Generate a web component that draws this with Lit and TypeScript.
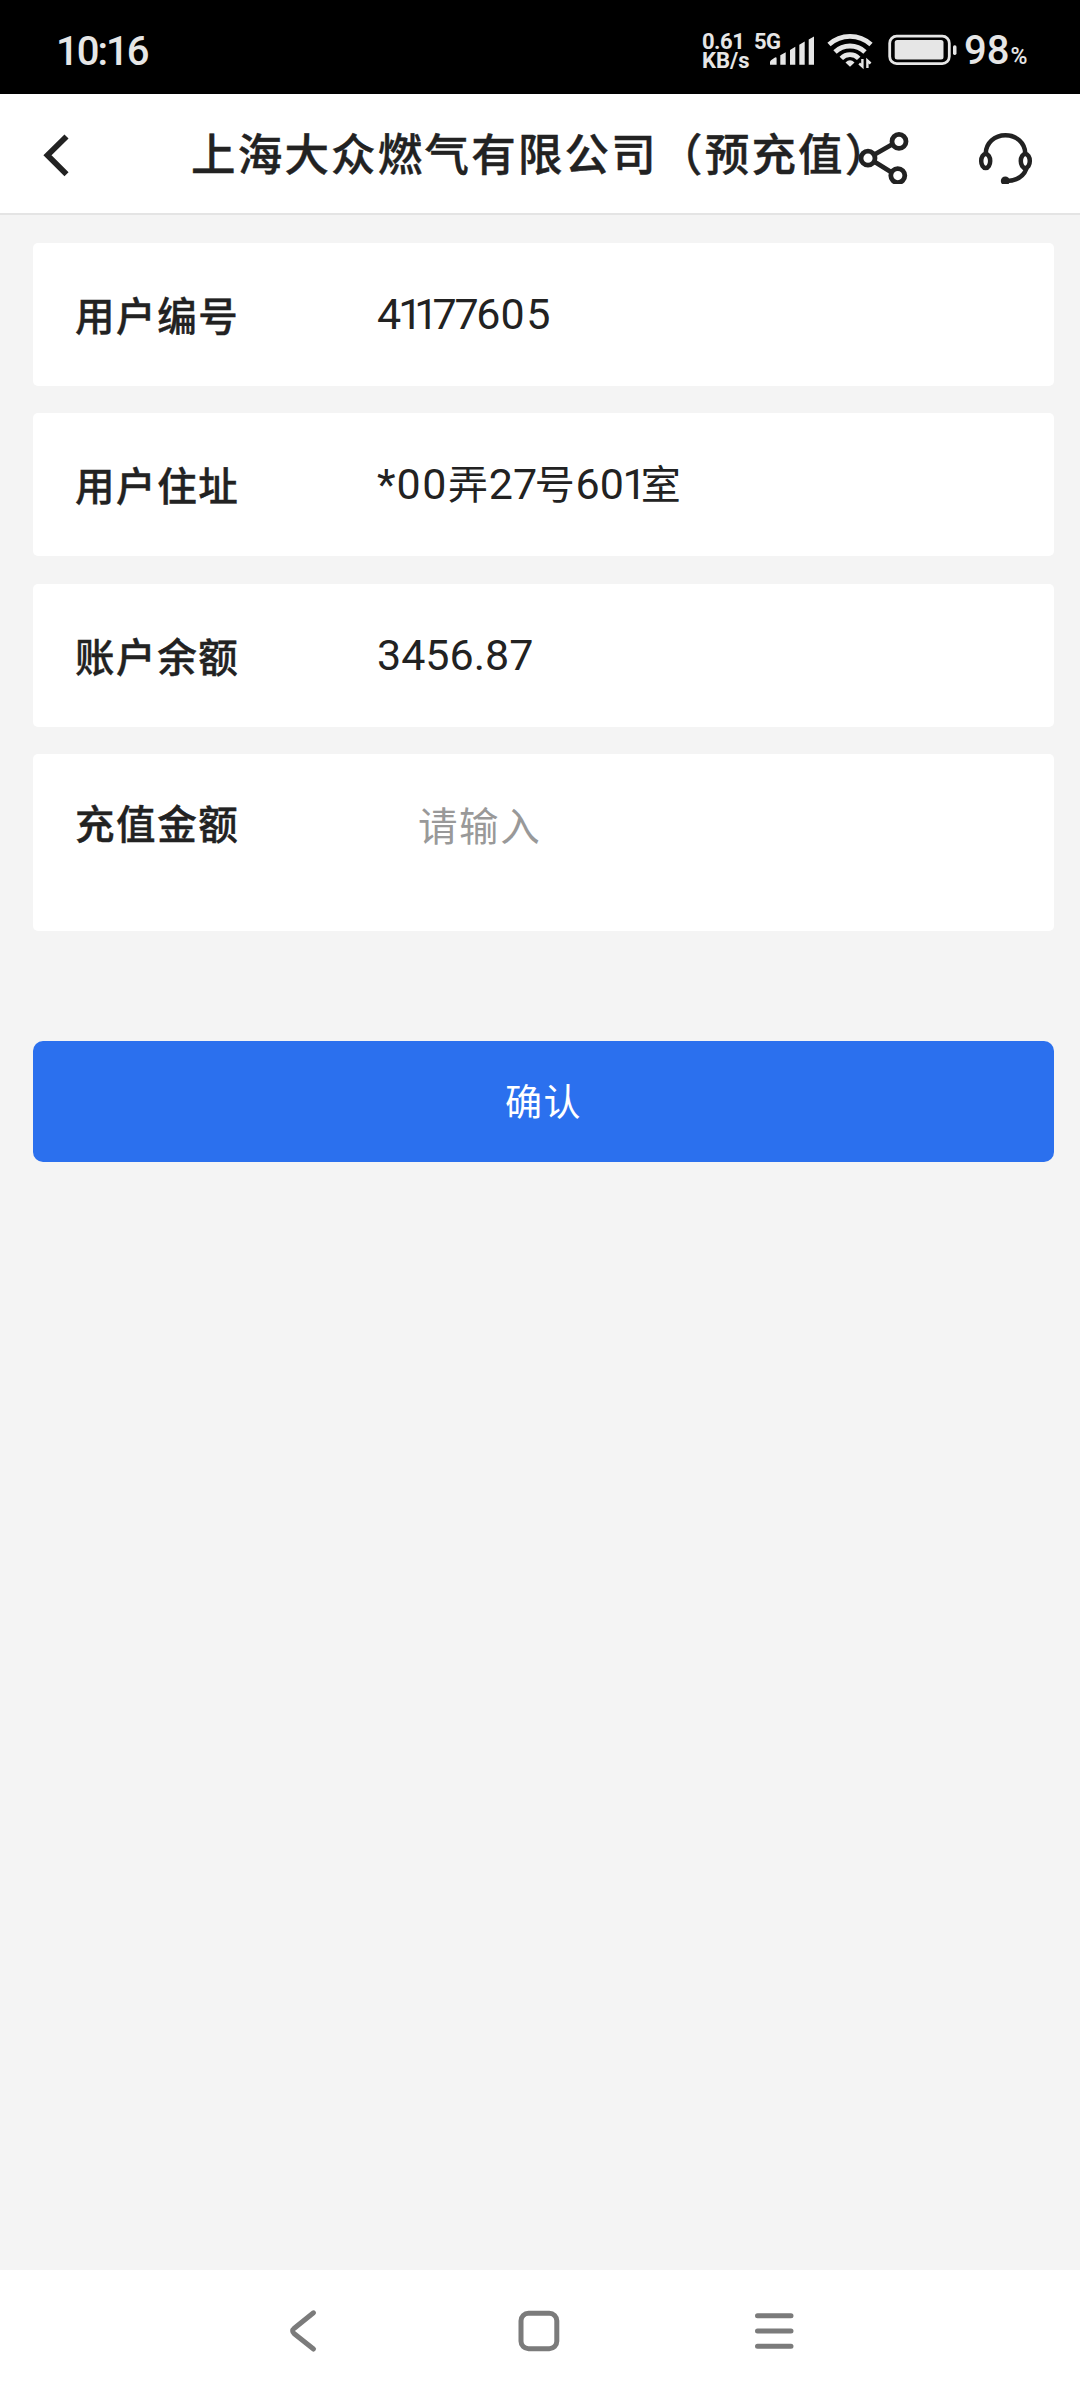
import { LitElement, html, css, svg } from "lit";
import { customElement, property } from "lit/decorators.js";

const baseFont = css`
  :host {
    font-family: Roboto, "Noto Sans CJK SC", sans-serif;
  }
`;

// Wraps runs of digits whose tracking differs from the rest of the value.
const digits = (text: string) =>
  text
    .split(/(1+|7+|0+|\*|[\u4e00-\u9fff]+)/)
    .filter((part) => part !== "")
    .map((part) => {
      if (part[0] === "1") return html`<span class="one">${part}</span>`;
      if (part[0] === "7") return html`<span class="seven">${part}</span>`;
      if (part[0] === "0") return html`<span class="zero">${part}</span>`;
      if (part[0] === "*") return html`<span class="star">${part}</span>`;
      if (part[0] >= "\u4e00") return html`<span class="han">${part}</span>`;
      return part;
    });

@customElement("status-bar")
class StatusBar extends LitElement {
  static styles = [
    baseFont,
    css`
      :host {
        display: flex;
        align-items: center;
        box-sizing: border-box;
        height: 94px;
        padding: 8px 0 0 56px;
        background: #000;
        color: #e6e6e6;
      }
      .time {
        width: 646px;
        padding-top: 1px;
        font-size: 40px;
        font-weight: 500;
        line-height: 48px;
        letter-spacing: -2px;
      }
      .rate {
        width: 52px;
        font-size: 22px;
        font-weight: 700;
        line-height: 19px;
        white-space: nowrap;
      }
      .rate div:first-child {
        letter-spacing: -0.5px;
      }
      .signal {
        display: grid;
        width: 62px;
        height: 40px;
      }
      .signal > * {
        grid-area: 1 / 1;
      }
      .net {
        font-size: 22px;
        font-weight: 700;
        line-height: 22px;
        letter-spacing: -0.5px;
      }
      .wifi {
        margin-left: 9px;
      }
      .battery {
        margin-left: 12px;
      }
      svg {
        display: block;
        flex: none;
      }
      .level {
        margin-left: 5px;
        padding-top: 5px;
        font-size: 40px;
        font-weight: 500;
        line-height: 48px;
        white-space: nowrap;
      }
      .percent {
        margin-left: 1px;
        font-size: 23px;
        font-weight: 500;
      }
    `,
  ];

  render() {
    return html`
      <div class="time">10:16</div>
      <div class="rate">
        <div>0.61</div>
        <div>KB/s</div>
      </div>
      <div class="signal">
        <svg width="62" height="40" viewBox="754 31 62 40" fill="#e6e6e6">
          <path
            d="M770 64.7v-2.4q0-1.2 1-2l3.600-2.600q2-1.200 2 .8v6.200zM780.300 64.700V55.200l5.400-3v12.500zM790 64.700V50l5.300-3.200v17.900zM799.300 64.700V44.800l5.400-3.200v23.100zM808.700 64.700V39.500l5.300-3v28.200z"
          />
        </svg>
        <div class="net">5G</div>
      </div>
      <svg class="wifi" width="50" height="40" viewBox="825 31 50 40" fill="none" stroke="#e6e6e6" stroke-width="4.800">
        <path d="M829 44.500a31 31 0 0 1 42 0M835 52a21.700 21.700 0 0 1 30 0M841.300 58.300a12 12 0 0 1 17.400 0" />
        <path d="M845.500 62.500q4.500-4.500 9 0l-4.500 4.300z" fill="#e6e6e6" stroke="none" />
        <path d="M862.400 59v7.500l-3.200-3M867.400 68v-7.500l3.200 3" stroke-width="2.400" />
      </svg>
      <svg class="battery" width="72" height="40" viewBox="887 31 72 40">
        <rect x="889.700" y="36.200" width="59.600" height="27.400" rx="7" fill="none" stroke="#e6e6e6" stroke-width="2.800" />
        <rect x="894.700" y="40" width="48.800" height="19.500" rx="2.500" fill="#e6e6e6" />
        <rect x="953" y="45.300" width="3.500" height="9.600" rx="1.600" fill="#e6e6e6" />
      </svg>
      <div class="level">98<span class="percent">%</span></div>
    `;
  }
}

@customElement("title-bar")
class TitleBar extends LitElement {
  static styles = [
    baseFont,
    css`
      :host {
        display: flex;
        align-items: center;
        box-sizing: border-box;
        height: 121px;
        padding: 0 46px 0 40px;
        background: #fff;
        border-bottom: 2px solid #e4e4e4;
        color: #222;
      }
      .back {
        margin-right: 119px;
      }
      .title {
        flex: 1;
        width: 0;
        margin: 0;
        padding-bottom: 3px;
        font-family: "Noto Sans CJK SC", sans-serif;
        font-size: 44.5px;
        font-weight: 500;
        line-height: 60px;
        letter-spacing: 2.2px;
        white-space: nowrap;
        -webkit-text-stroke: 0.4px #222;
      }
      .share {
        margin-right: 64px;
      }
      svg {
        display: block;
        flex: none;
        fill: none;
        stroke: #222;
      }
    `,
  ];

  @property() heading = "";

  render() {
    return html`
      <svg class="back" width="32" height="48" viewBox="40 130 32 48" stroke-width="5.800">
        <path d="M66.500 136.500 47.500 155.300 66.500 174.200" />
      </svg>
      <h1 class="title">${this.heading}</h1>
      <svg class="share" width="52" height="60" viewBox="858 124 52 60" stroke-width="4.800">
        <path d="M874.500 154.500 892 144.500M874.500 161.700 891 172" />
        <circle cx="868" cy="158.200" r="7" />
        <circle cx="899" cy="141.400" r="7" />
        <circle cx="897.800" cy="175.600" r="7" />
      </svg>
      <svg width="60" height="60" viewBox="974 124 60 60" stroke-width="4.500">
        <path d="M985.700 153.500C986 143 994.500 135.300 1005.500 135.300S1025 143 1025.300 153.500" />
        <ellipse cx="985.700" cy="161" rx="4.500" ry="7" />
        <ellipse cx="1025.300" cy="161" rx="4.500" ry="7" />
        <path d="M1026.500 168.500C1023.500 176.500 1016 181 1005.500 181" />
        <circle cx="1005.300" cy="181" r="4.500" fill="#222" stroke="none" />
      </svg>
    `;
  }
}

@customElement("info-row")
class InfoRow extends LitElement {
  static styles = [
    baseFont,
    css`
      :host {
        display: flex;
        box-sizing: border-box;
        height: 143px;
        padding: 44px 20px 0 42px;
        background: #fff;
        border-radius: 5px;
        color: #222;
      }
      :host([editable]) {
        height: 177px;
        padding-top: 41px;
      }
      .label {
        width: 302px;
        padding-top: 1px;
        font-size: 39.500px;
        font-weight: 500;
        line-height: 60px;
        letter-spacing: 1.600px;
        white-space: nowrap;
        -webkit-text-stroke: 0.400px #222;
      }
      .value {
        font-size: 43px;
        line-height: 55px;
        letter-spacing: 0;
        white-space: nowrap;
      }
      .one {
        margin-left: -3px;
        margin-right: 2px;
        letter-spacing: -8px;
      }
      .seven {
        letter-spacing: -2.300px;
      }
      .zero {
        letter-spacing: 1.600px;
      }
      .star {
        letter-spacing: 1px;
      }
      .han {
        font-size: 40px;
        letter-spacing: 0.700px;
      }
      .field {
        flex: 1;
        min-width: 0;
        height: 60px;
        margin: -1px 0 0;
        padding: 0 0 0 41px;
        border: 0;
        outline: 0;
        background: none;
        font-family: "Noto Sans CJK SC", sans-serif;
        font-size: 39.500px;
        letter-spacing: 1.600px;
        color: #222;
      }
      .field::placeholder {
        color: #999;
        opacity: 1;
      }
    `,
  ];

  @property() label = "";
  @property() value = "";
  @property() placeholder = "";
  @property({ type: Boolean, reflect: true }) editable = false;

  render() {
    return html`
      <div class="label">${this.label}</div>
      ${this.editable
        ? html`<input class="field" placeholder=${this.placeholder} />`
        : html`<div class="value">${digits(this.value)}</div>`}
    `;
  }
}

@customElement("nav-bar")
class NavBar extends LitElement {
  static styles = css`
    :host {
      display: flex;
      align-items: center;
      justify-content: center;
      gap: 187px;
      box-sizing: border-box;
      height: 130px;
      padding: 0 3px 8px 0;
      background: #fff;
    }
    svg {
      display: block;
      fill: none;
      stroke: #7b7b7b;
      stroke-width: 5;
      stroke-linecap: round;
    }
  `;

  private icon(shape: unknown) {
    return html`<svg width="48" height="48" viewBox="0 0 48 48">${shape}</svg>`;
  }

  render() {
    return html`
      ${this.icon(svg`<path d="M33.500 5.800 14.300 21.200Q11 24 14.300 26.800L33.500 42" />`)}
      ${this.icon(svg`<rect x="6" y="6.200" width="35.800" height="35.600" rx="7.500" />`)}
      ${this.icon(svg`<path d="M7.500 8.700H41M7.500 24H41M7.500 39.300H41" />`)}
    `;
  }
}

@customElement("app-root")
class AppRoot extends LitElement {
  static styles = [
    baseFont,
    css`
      :host {
        display: flex;
        flex-direction: column;
        height: 2400px;
        background: #f4f4f4;
      }
      .content {
        flex: 1;
        display: flex;
        flex-direction: column;
        padding: 28px 26px 0 33px;
      }
      .rows {
        display: flex;
        flex-direction: column;
        gap: 27.300px;
      }
      .confirm {
        height: 121px;
        margin: 110px 0 0;
        padding: 0 0 3px;
        border: 0;
        border-radius: 10px;
        background: #2b70ee;
        color: #fff;
        font-family: "Noto Sans CJK SC", sans-serif;
        font-size: 37px;
        letter-spacing: 1.500px;
      }
    `,
  ];

  render() {
    return html`
      <status-bar></status-bar>
      <title-bar heading="上海大众燃气有限公司（预充值）"></title-bar>
      <main class="content">
        <div class="rows">
          <info-row label="用户编号" value="41177605"></info-row>
          <info-row label="用户住址" value="*00弄27号601室"></info-row>
          <info-row label="账户余额" value="3456.87"></info-row>
          <info-row label="充值金额" placeholder="请输入" editable></info-row>
        </div>
        <button class="confirm">确认</button>
      </main>
      <nav-bar></nav-bar>
    `;
  }
}
